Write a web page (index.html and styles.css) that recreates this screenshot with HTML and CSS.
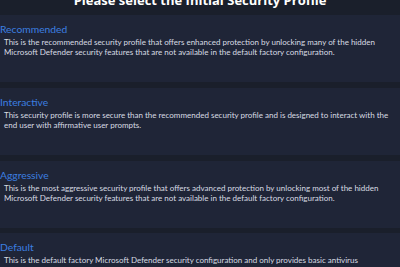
FILE: index.html
```html
<!DOCTYPE html>
<html>
<head>
<meta charset="utf-8">
<link rel="stylesheet" href="styles.css">
</head>
<body>
<div class="page">
  <div class="header"><h1 class="heading">Please select the Initial Security Profile</h1></div>
  <div class="list">
    <div class="card">
      <div class="title">Recommended</div>
      <p class="desc">This is the recommended security profile that offers enhanced protection by unlocking many of the hidden<br>Microsoft Defender security features that are not available in the default factory configuration.</p>
    </div>
    <div class="card">
      <div class="title">Interactive</div>
      <p class="desc">This security profile is more secure than the recommended security profile and is designed to interact with the<br>end user with affirmative user prompts.</p>
    </div>
    <div class="card">
      <div class="title">Aggressive</div>
      <p class="desc">This is the most aggressive security profile that offers advanced protection by unlocking most of the hidden<br>Microsoft Defender security features that are not available in the default factory configuration.</p>
    </div>
    <div class="card">
      <div class="title">Default</div>
      <p class="desc">This is the default factory Microsoft Defender security configuration and only provides basic antivirus<br>protection.</p>
    </div>
  </div>
</div>
</body>
</html>
```
FILE: styles.css
```css
html, body {
  margin: 0;
  padding: 0;
  background: #1a1f2b;
  width: 400px;
  height: 267px;
  overflow: hidden;
}
.page {
  font-family: "Lato", "Open Sans", sans-serif;
  display: flex;
  flex-direction: column;
}
.header {
  height: 15px;
  display: flex;
  align-items: flex-end;
  justify-content: center;
  overflow: hidden;
  box-sizing: border-box;
}
.heading {
  margin: 0 0 8px 0;
  font-family: "Open Sans", sans-serif;
  font-size: 13px;
  line-height: 14px;
  font-weight: 700;
  color: #ffffff;
  white-space: nowrap;
}
.list {
  display: flex;
  flex-direction: column;
  gap: 6px;
}
.card {
  background: #1f2537;
  height: 67px;
  box-sizing: border-box;
  padding-top: 7px;
}
.card:last-child {
  margin-top: -1px;
}
.title {
  font-size: 10.3px;
  line-height: 14px;
  color: #3c7fe0;
  white-space: nowrap;
}
.desc {
  margin: 1px 0 0 0;
  padding-left: 4px;
  font-size: 8px;
  line-height: 10px;
  color: #d8dce3;
  white-space: nowrap;
}
```
